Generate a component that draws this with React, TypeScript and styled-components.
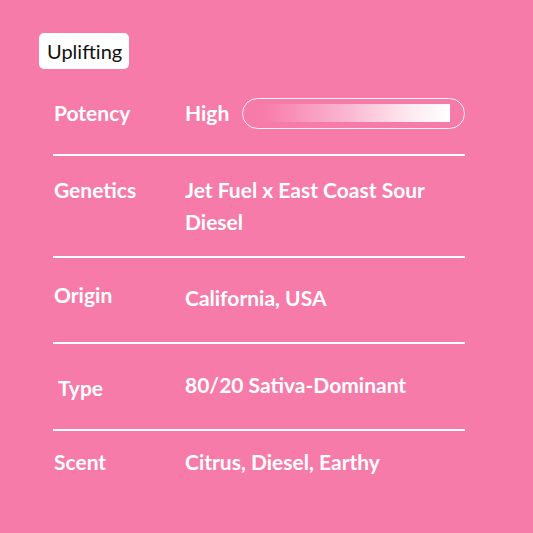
import React from "react";
import styled, { createGlobalStyle } from "styled-components";

const Global = createGlobalStyle`
  html, body { margin: 0; padding: 0; background: #f77ba8; }
  body { font-family: Lato, "Noto Sans", sans-serif; }
`;

const Page = styled.div`
  width: 533px;
  height: 533px;
  box-sizing: border-box;
  padding: 33px 0 0 39px;
  background: #f77ba8;
  color: #fff;
`;

const Badge = styled.div`
  display: inline-flex;
  align-items: center;
  height: 36px;
  box-sizing: border-box;
  padding: 0 7px 0 8px;
  background: #fff;
  border-radius: 5px;
  color: #111;
  font-size: 20px;
  font-weight: 400;
`;

const Table = styled.div`
  margin-left: 14px;
  width: 412px;
  display: flex;
  flex-direction: column;
`;

const Row = styled.div<{ $pt: number; $pb: number; $last?: boolean }>`
  display: grid;
  grid-template-columns: 132px 1fr;
  align-items: start;
  padding: ${(p) => p.$pt}px 0 ${(p) => p.$pb}px;
  border-bottom: ${(p) => (p.$last ? "none" : "2px solid #fff")};
  font-size: 21px;
  font-weight: 700;
  line-height: 32px;
`;

const Label = styled.div<{ $dy?: number; $dx?: number }>`
  margin-top: ${(p) => p.$dy ?? 0}px;
  padding-left: ${(p) => 1 + (p.$dx ?? 0)}px;
`;

const Value = styled.div<{ $dy?: number }>`
  margin-top: ${(p) => p.$dy ?? 0}px;
  display: flex;
  align-items: center;
  gap: 13px;
`;

const Meter = styled.div`
  width: 223px;
  height: 31px;
  box-sizing: border-box;
  border: 1.5px solid rgba(255, 255, 255, 0.9);
  border-radius: 16px;
  display: flex;
  align-items: center;
  padding: 0 14px 0 19px;
`;

const Fill = styled.div`
  flex: 1;
  height: 18px;
  background: linear-gradient(
    to right,
    rgba(255, 255, 255, 0) 0%,
    rgba(255, 255, 255, 0.45) 45%,
    rgba(255, 255, 255, 0.85) 80%,
    #fff 100%
  );
`;

export default function App() {
  return (
    <>
      <Global />
      <Page>
        <Badge>Uplifting</Badge>
        <Table>
          <Row $pt={28} $pb={25}>
            <Label>Potency</Label>
            <Value>
              High
              <Meter>
                <Fill />
              </Meter>
            </Value>
          </Row>
          <Row $pt={18} $pb={18}>
            <Label>Genetics</Label>
            <Value>Jet Fuel x East Coast Sour Diesel</Value>
          </Row>
          <Row $pt={21} $pb={28}>
            <Label>Origin</Label>
            <Value $dy={3}>California, USA</Value>
          </Row>
          <Row $pt={25} $pb={25}>
            <Label $dy={3} $dx={4}>Type</Label>
            <Value>80/20 Sativa-Dominant</Value>
          </Row>
          <Row $pt={15} $pb={0} $last>
            <Label>Scent</Label>
            <Value>Citrus, Diesel, Earthy</Value>
          </Row>
        </Table>
      </Page>
    </>
  );
}
